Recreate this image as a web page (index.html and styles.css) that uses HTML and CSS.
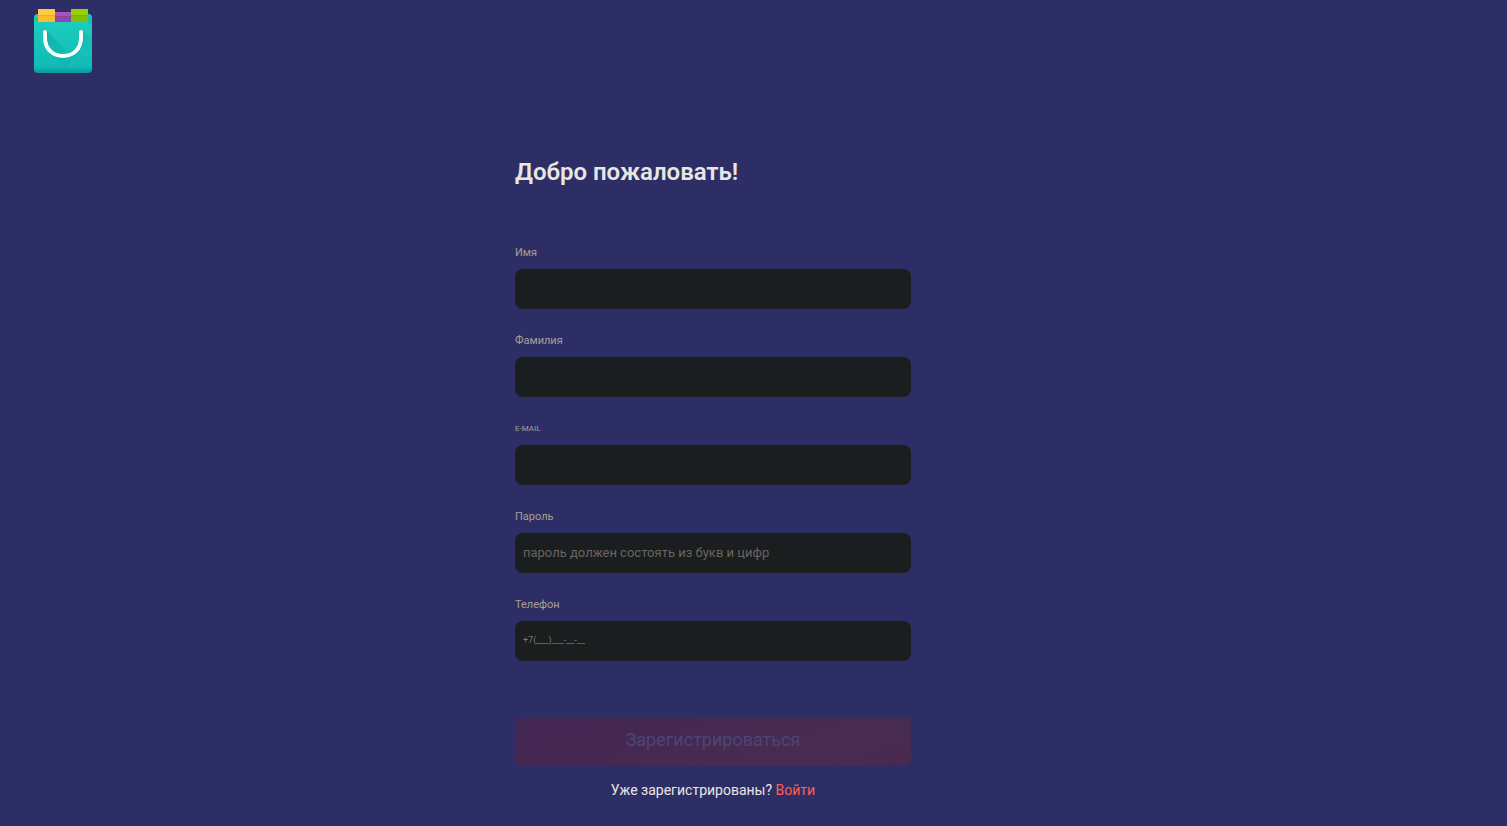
FILE: index.html
```html
<!DOCTYPE html>
<html lang="ru">
<head>
<meta charset="utf-8">
<meta name="viewport" content="width=device-width, initial-scale=1">
<title>Регистрация</title>
<link rel="stylesheet" href="styles.css">
</head>
<body>
<header class="header">
  <a class="logo" href="#" aria-label="На главную">
    <svg width="58" height="65" viewBox="0 0 58 65" aria-hidden="true">
      <defs>
        <linearGradient id="bag" x1="0" y1="0" x2="0" y2="1"><stop offset="0" stop-color="#1dcfbe"/><stop offset=".88" stop-color="#13bcb7"/><stop offset="1" stop-color="#079b9c"/></linearGradient>
        <linearGradient id="shade" x1="0" y1="0" x2="1" y2="1"><stop offset="0" stop-color="#078e91" stop-opacity=".4"/><stop offset="1" stop-color="#078e91" stop-opacity="0"/></linearGradient>
      </defs>
      <path d="M0 9Q0 5 4 5H54Q58 5 58 9V60Q58 64 54 64H4Q0 64 0 60Z" fill="url(#bag)"/>
      <path d="M0 9L4 13H54V5L58 9V17L54 13Z" fill="#078e91" opacity=".25"/>
      <path d="M13 22L33 42 24 45 13 34ZM49 22L58 31V44L45 38Z" fill="url(#shade)"/>
      <path d="M17 43L32 58 45 41 34 47Z" fill="#078e91" opacity=".15"/>
      <path d="M11 23V29C11 40 19 47 29 47S47 40 47 29V23" fill="none" stroke="#078e91" stroke-opacity=".25" stroke-width="5" stroke-linecap="round"/>
      <path d="M11 23V29C11 40 19 47 29 47S47 40 47 29V23" fill="none" stroke="#f9fffb" stroke-width="4" stroke-linecap="round"/>
      <path d="M20 3H38V13H20Z" fill="#9244ae"/><path d="M20 3H38V7H20Z" fill="#a653bd"/>
      <path d="M4 1Q4 0 5 0H20Q21 0 21 1V13H4Z" fill="#ffb92f"/><path d="M4 1Q4 0 5 0H20Q21 0 21 1V6H4Z" fill="#ffca43"/>
      <path d="M37 1Q37 0 38 0H53Q54 0 54 1V13H37Z" fill="#83bf00"/><path d="M37 1Q37 0 38 0H53Q54 0 54 1V6H37Z" fill="#9bd000"/>
      <path d="M4 6.500H21M37 6.500H54M20 7.500H38" stroke="#584b21" stroke-opacity=".12"/>
    </svg>
  </a>
</header>
<main class="main">
  <form class="form">
    <h1 class="title">Добро пожаловать!</h1>
    <div class="fields">
      <div class="field"><label class="label" for="name">Имя</label><input class="input" id="name" type="text"></div>
      <div class="field"><label class="label" for="surname">Фамилия</label><input class="input" id="surname" type="text"></div>
      <div class="field"><label class="label label-latin" for="email">E-MAIL</label><input class="input" id="email" type="email"></div>
      <div class="field"><label class="label" for="password">Пароль</label><input class="input" id="password" type="password" placeholder="пароль должен состоять из букв и цифр"></div>
      <div class="field"><label class="label" for="phone">Телефон</label><input class="input input-phone" id="phone" type="tel" placeholder="+7(___)___-__-__"></div>
    </div>
    <button class="submit" type="submit" disabled>Зарегистрироваться</button>
    <p class="signin">Уже зарегистрированы? <a class="link" href="#">Войти</a></p>
  </form>
</main>
</body>
</html>
```
FILE: styles.css
```css
* { box-sizing: border-box; }
body {
  margin: 0;
  background: #2e2e66;
  color: #e8e6e3;
  font-family: Roboto, "Noto Sans", sans-serif;
}
.header { padding: 9px 34px 0; }
.logo { display: inline-block; height: 65px; }
.logo svg { display: block; }
.main { padding: 76px 81px 24px 0; }
.form {
  display: flex;
  flex-direction: column;
  width: 100%;
  max-width: 396px;
  margin: 0 auto;
}
.title {
  margin: 0 0 55px;
  font-size: 24px;
  line-height: 36px;
  font-weight: 600;
}
.fields { display: flex; flex-direction: column; gap: 24px; }
.field { display: flex; flex-direction: column; gap: 8px; }
.label { font-size: 11px; line-height: 16px; color: #a8a095; }
.label-latin { font-size: 8px; }
.input {
  width: 100%;
  height: 40px;
  padding: 0 8px 2px;
  border: 0;
  border-radius: 8px;
  background: #1b1e1f;
  color: #e8e6e3;
  font-family: inherit;
  font-size: 13px;
}
.input::placeholder { color: #69655f; opacity: 1; }
.input-phone { font-size: 9px; }
.input-phone::placeholder { color: #7d7870; }
.submit {
  height: 49px;
  margin-top: 56px;
  padding: 0 8px 4px;
  border: 0;
  border-radius: 8px;
  background: linear-gradient(160deg, #432653, #482c50 80%, #4a2750);
  color: #4b4676;
  font-family: inherit;
  font-size: 18px;
}
.signin {
  margin: 14px 0 0;
  font-size: 14px;
  line-height: 20px;
  text-align: center;
}
.link { color: #ff6046; text-decoration: none; }
```
